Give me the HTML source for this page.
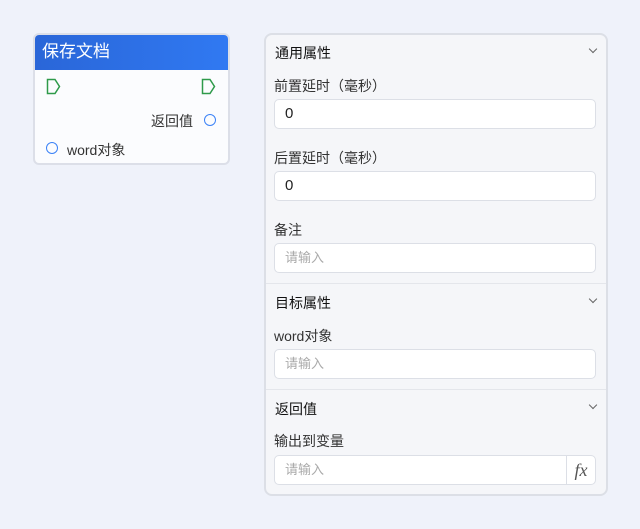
<!DOCTYPE html>
<html><head><meta charset="utf-8"><style>
*{box-sizing:border-box;margin:0;padding:0}
body{width:640px;height:529px;background:#eff2fa;font-family:"Liberation Sans","Noto Sans CJK SC",sans-serif;position:relative;overflow:hidden;color:#222}
.node{position:absolute;left:33px;top:33px;width:197px;height:132px;border:2px solid #dcdfe8;border-radius:6px;background:#fbfcfe;overflow:hidden}
.nh{height:35px;background:linear-gradient(90deg,#2a66d8,#3079f2);color:#fff;font-size:17px;line-height:33px;padding-left:7px}
.abs{position:absolute}
.t{font-size:14px;color:#333}
.circ{position:absolute;width:12px;height:12px;border:1.5px solid #3b82f6;border-radius:50%}
.panel{position:absolute;left:264px;top:33px;width:344px;height:463px;background:#f5f6f9;border:2px solid #dcdfe6;border-radius:8px}
.h{position:absolute;left:9px;font-size:14px;color:#111}
.chev{position:absolute;right:10px;width:6px;height:6px;border-right:1.3px solid #666;border-bottom:1.3px solid #666;transform:rotate(45deg)}
.l{position:absolute;left:8px;font-size:14px;color:#333}
.in{position:absolute;left:8px;width:322px;height:30px;background:#fff;border:1px solid #dcdfe6;border-radius:5px;font-size:15px;line-height:28px;padding-left:10px;color:#222}
.ph{color:#aaa;font-size:13px}
.div{position:absolute;left:0;right:0;height:1px;background:#e4e6eb}
</style></head><body>
<div class="node">
<div class="nh">保存文档</div>
<svg class="abs" style="left:11px;top:43px" width="16" height="18"><path d="M1.5 1.5h7.5l4.5 7-4.5 7H1.5z" fill="none" stroke="#2e9a4a" stroke-width="1.5"/></svg>
<svg class="abs" style="left:166px;top:43px" width="16" height="18"><path d="M1.5 1.5h7.5l4.5 7-4.5 7H1.5z" fill="none" stroke="#2e9a4a" stroke-width="1.5"/></svg>
<div class="abs t" style="left:116px;top:76px">返回值</div>
<div class="circ" style="left:169px;top:79px"></div>
<div class="circ" style="left:11px;top:107px"></div>
<div class="abs t" style="left:32px;top:105px">word对象</div>
</div>
<div class="panel">
<div class="h" style="top:8px">通用属性</div><div class="chev" style="top:11px"></div>
<div class="l" style="top:41px">前置延时（毫秒）</div>
<div class="in" style="top:64px">0</div>
<div class="l" style="top:113px">后置延时（毫秒）</div>
<div class="in" style="top:136px">0</div>
<div class="l" style="top:185px">备注</div>
<div class="in ph" style="top:208px">请输入</div>
<div class="div" style="top:248px"></div>
<div class="h" style="top:258px">目标属性</div><div class="chev" style="top:261px"></div>
<div class="l" style="top:291px">word对象</div>
<div class="in ph" style="top:314px">请输入</div>
<div class="div" style="top:354px"></div>
<div class="h" style="top:364px">返回值</div><div class="chev" style="top:367px"></div>
<div class="l" style="top:396px">输出到变量</div>
<div class="in ph" style="top:420px">请输入<div style="position:absolute;right:0;top:0;width:29px;height:28px;border-left:1px solid #dcdfe6;color:#555;font-family:'Liberation Serif',serif;font-style:italic;font-size:18px;text-align:center;line-height:28px">fx</div></div>
</div>
</body></html>
